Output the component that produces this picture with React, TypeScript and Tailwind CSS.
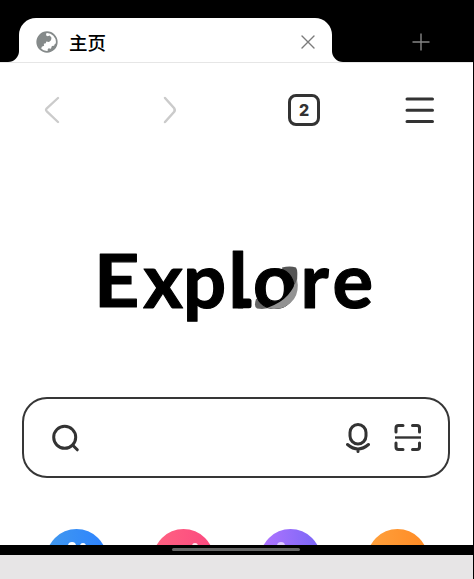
const letters = [
  { ch: 'x', x: 143.2 },
  { ch: 'p', x: 183 },
  { ch: 'l', x: 228.5 },
  { ch: 'o', x: 253 },
  { ch: 'r', x: 300.5 },
  { ch: 'e', x: 332.5 },
];

function Globe() {
  return (
    <svg width="22" height="22" viewBox="0 0 22 22">
      <circle cx="11" cy="11" r="9.8" fill="#fff" stroke="#858a8a" strokeWidth="1.7" />
      <path fill="#858a8a" d="M1.500 10C2 5 6 1 10.500 1.500L10 4.200l1.500 1 2.300-.7 1.700 2.300-.5 2.400-2 1.800-2.700-.4-.5 1.600-2 .5.300 2-2.300 1-.8 2.500C2.500 16.500 1.200 13.500 1.500 10Z" />
      <path fill="#858a8a" d="M20.800 12.500c-.5 4-3.800 7.500-8.200 8.200l-1.200-1.800 1.200-1.700 2.300.5 1-2.700 2.200-.2.700-1.800Z" />
    </svg>
  );
}

function Wordmark() {
  return (
    <svg className="block shrink-0" width="474" height="120" viewBox="0 225 474 120" role="img" aria-label="Explore">
      <path d="M282 267.500Q290 265.500 296 267.500Q298.500 271 296.500 284L286 287Z" fill="#555" />
      <path d="M256 299Q253.500 307 257 308.500Q266 310 276 306L264 296Z" fill="#666" />
      <g className="font-['Lato',sans-serif] text-[76px] font-bold" fill="#000" stroke="#000" strokeWidth="1.2" strokeLinejoin="round">
        <text x="94" y="307.500" className="text-[73px]" transform="translate(95 0) scale(1.08 1) translate(-95 0)">E</text>
        {letters.map((l) => (
          <text key={l.ch} x={l.x} y="308">{l.ch}</text>
        ))}
      </g>
      <rect x="236" y="298.500" width="15.500" height="9.700" rx="2.500" />
      <path d="M297 279Q299.500 291 294 299Q286.500 309.500 273 309L267 308Q281 303 288 295Q294 288 297 279Z" fill="#929292" />
    </svg>
  );
}

export default function App() {
  return (
    <div className="flex h-[579px] w-[474px] flex-col overflow-hidden border-r border-black bg-white font-['Noto_Sans_CJK_SC',sans-serif]">
      <header className="h-[63px] shrink-0 border-b border-[#e6e6e6] bg-white">
        <div className="h-[18px] bg-black" />
        <div className="flex h-[44px]">
          <div className="w-[19px] rounded-br-[11px] bg-black" />
          <div className="w-[313px] bg-black">
            <div className="flex h-full items-center rounded-t-[17px] bg-white pt-1 pl-[17px] pr-[17px]">
              <Globe />
              <span className="mb-px ml-[11px] text-[18.5px] leading-6 font-medium text-black">主页</span>
              <svg className="ml-auto" width="14" height="14" viewBox="0 0 14 14" stroke="#7b7b7b" strokeWidth="1.400" strokeLinecap="round">
                <path d="M1 1 13 13M13 1 1 13" />
              </svg>
            </div>
          </div>
          <div className="flex flex-1 items-center rounded-bl-[11px] bg-black pt-1 pl-[80px]">
            <svg width="18" height="18" viewBox="0 0 18 18" stroke="#858585" strokeWidth="1.400">
              <path d="M9 .5v17M.5 9h17" />
            </svg>
          </div>
        </div>
      </header>

      <nav className="flex h-[94px] shrink-0 items-center pl-[44px]">
        <svg width="18" height="28" viewBox="0 0 18 28" fill="none" stroke="#cbcbcb" strokeWidth="2.300" strokeLinecap="round" strokeLinejoin="round">
          <path d="M14 2 2.800 12.300q-1.500 1.500 0 3L14 26" />
        </svg>
        <svg className="ml-[98px]" width="18" height="28" viewBox="0 0 18 28" fill="none" stroke="#cbcbcb" strokeWidth="2.500" strokeLinecap="round" strokeLinejoin="round">
          <path d="m5 2 9 10q1.500 2 0 4L5 26" />
        </svg>
        <div className="ml-[110px] flex size-8 items-center justify-center rounded-[8px] border-[3px] border-[#333] font-['Inter',sans-serif] text-[16px] leading-none font-extrabold text-[#333]">2</div>
        <svg className="ml-[85px]" width="29" height="28" viewBox="0 0 29 28" stroke="#333" strokeWidth="3" strokeLinecap="round">
          <path d="M2 3h25.500M2 14.300h25.500M2 25.600h25.500" />
        </svg>
      </nav>

      <main className="flex h-[388px] shrink-0 flex-col overflow-hidden pt-[68px]">
        <Wordmark />
        <div className="mt-[52px] ml-[22px] flex h-[81px] w-[428px] shrink-0 items-center rounded-[25px] border-2 border-[#363636] pl-[28px]">
          <svg width="28" height="28" viewBox="0 0 28 28" fill="none" stroke="#333" strokeWidth="3" strokeLinecap="round">
            <circle cx="12.700" cy="13.300" r="11" />
            <path d="m20.500 21 4.800 4.800" />
          </svg>
          <svg className="ml-[266px]" width="24" height="30" viewBox="0 0 24 30" fill="none" stroke="#333" strokeWidth="3" strokeLinecap="round">
            <rect x="4" y="1.500" width="16" height="19.500" rx="8" />
            <path d="M1.500 21.500Q12 30.500 22.500 21.500M12 26.500v2" />
          </svg>
          <svg className="ml-[24px]" width="28" height="28" viewBox="0 0 28 28" fill="none" stroke="#333" strokeWidth="3" strokeLinecap="round" strokeLinejoin="round">
            <path d="M9 1.500H4.500Q2 1.500 2 4V8M18.500 1.500H23q2.500 0 2.500 2.500V8M2 19v4q0 2.500 2.500 2.500H9M18.500 25.500H23q2.500 0 2.500-2.500v-4" />
            <path d="M1 13.500h26" strokeWidth="2.400" strokeLinecap="butt" />
          </svg>
        </div>
        <div className="mt-[51px] ml-[46px] flex h-[60px] shrink-0 gap-[46px]">
          <div className="relative size-[61px] shrink-0 rounded-full bg-linear-to-r from-[#4299ee] to-[#2d82ff]">
            <i className="absolute top-[13px] left-[22px] size-2 rounded-full bg-white" />
            <i className="absolute top-[14px] left-[34px] size-1.5 rounded-full bg-white" />
          </div>
          <div className="relative size-[61px] shrink-0 rounded-full bg-linear-to-r from-[#ff6282] to-[#fb487f]">
            <i className="absolute top-[14px] left-[39px] size-1.5 rounded-full bg-[#ffe8ee]" />
          </div>
          <div className="relative size-[61px] shrink-0 rounded-full bg-linear-to-r from-[#b174ff] to-[#7865f6]">
            <i className="absolute top-[13px] left-[17px] size-2 rounded-full bg-[#dec9ff]" />
          </div>
          <div className="size-[61px] shrink-0 rounded-full bg-linear-to-r from-[#ffa13c] to-[#ff8a23]" />
        </div>
      </main>

      <footer className="flex flex-1 flex-col bg-[#e7e5e6]">
        <div className="h-[9.500px] bg-black pt-[3px] pl-[172px]">
          <div className="h-[3px] w-[128px] rounded-full bg-[#656565]" />
        </div>
      </footer>
    </div>
  );
}
